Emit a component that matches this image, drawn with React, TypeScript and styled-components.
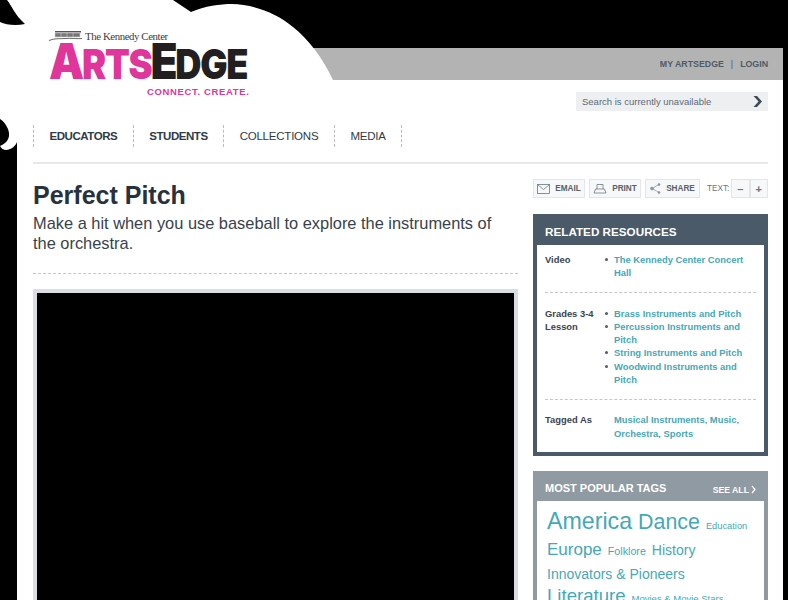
import React from "react";
import styled, { createGlobalStyle } from "styled-components";

const Global = createGlobalStyle`
  html, body { margin: 0; padding: 0; background: #000; }
  body { font-family: "Liberation Sans", Arial, sans-serif; }
  a { text-decoration: none; color: inherit; }
`;

const Viewport = styled.div`
  position: relative;
  width: 788px;
  height: 600px;
  overflow: hidden;
  background: #000;
`;

const Cloud = styled.svg`
  position: absolute;
  left: 0;
  top: 0;
  z-index: 1;
`;

const Logo = styled.div`
  position: absolute;
  left: 49px;
  top: 29px;
  z-index: 2;
  width: 205px;
`;

const Kennedy = styled.div`
  display: flex;
  align-items: center;
  gap: 3px;
  height: 13px;
  font-family: "Liberation Serif", serif;
  font-size: 10.8px;
  letter-spacing: -0.4px;
  color: #3a3a3a;
`;

const Wordmark = styled.div`
  display: flex;
  align-items: baseline;
  height: 37px;
  font-family: "Inter", sans-serif;
  font-weight: 900;
  font-size: 41px;
  line-height: 38px;
  letter-spacing: -1.5px;
  white-space: nowrap;
  transform: scaleX(0.885);
  transform-origin: left center;
`;

const Arts = styled.span`
  color: #e0359b;
`;

const Edge = styled.span`
  color: #231f20;
  margin-left: -1px;
`;

const BigLetter = styled.span`
  font-size: 50px;
  letter-spacing: -2.5px;
`;

const Tagline = styled.div`
  margin: 7px 0 0 98px;
  font-weight: 700;
  font-size: 9.5px;
  line-height: 12px;
  letter-spacing: 0.65px;
  white-space: nowrap;
  color: #e0359b;
`;

const Panel = styled.div`
  margin: 48px 0 0 17px;
  width: 766px;
  height: 552px;
  overflow: hidden;
  background: #fff;
  display: flex;
  flex-direction: column;
`;

const TopBar = styled.div`
  height: 32px;
  flex: none;
  background: #b3b3b3;
  display: flex;
  justify-content: flex-end;
  align-items: center;
  padding: 0 15px 0 0;
  font-size: 8.8px;
  font-weight: 700;
  color: #4d5b68;
  box-sizing: border-box;
`;

const TopSep = styled.span`
  margin: 0 7px;
  font-weight: 400;
`;

const SearchRow = styled.div`
  display: flex;
  justify-content: flex-end;
  padding: 12px 15px 0 0;
`;

const SearchBox = styled.div`
  width: 192px;
  height: 19px;
  box-sizing: border-box;
  background: #edeff1;
  display: flex;
  align-items: center;
  justify-content: space-between;
  padding: 0 4px 0 6px;
  font-size: 9.5px;
  color: #5d6a75;
`;

const Nav = styled.nav`
  display: flex;
  margin: 14px 0 0 16px;
  height: 22px;
  align-items: center;
  border-left: 1px dashed #b9bdc1;
`;

const NavItem = styled.a<{ $bold?: boolean }>`
  display: flex;
  align-items: center;
  height: 22px;
  padding: 0 15.5px;
  border-right: 1px dashed #b9bdc1;
  font-size: 11.5px;
  font-weight: ${(p) => (p.$bold ? 700 : 400)};
  color: #2f3b47;
  letter-spacing: ${(p) => (p.$bold ? "-0.45px" : "-0.22px")};
`;

const Rule = styled.div`
  margin: 15px 15px 0 16px;
  height: 2px;
  background: #e6e8ea;
`;

const Content = styled.div`
  display: grid;
  grid-template-columns: 485px 235px;
  column-gap: 15px;
  margin: 0 0 0 16px;
  flex: 1;
  min-height: 0;
`;

const Left = styled.div`
  display: flex;
  flex-direction: column;
  padding-top: 15px;
`;

const Title = styled.h1`
  margin: 0;
  font-size: 25px;
  line-height: 32px;
  font-weight: 700;
  color: #27323e;
`;

const Sub = styled.p`
  margin: 3px 0 0;
  font-size: 16.4px;
  line-height: 19.5px;
  color: #38424d;
`;

const DottedRule = styled.div`
  margin-top: 20px;
  border-top: 1px dashed #c4c7ca;
`;

const VideoBox = styled.div`
  margin-top: 15px;
  flex: 1;
  background: #000;
  border: 4px solid #dadde1;
  border-bottom: none;
`;

const Right = styled.div`
  display: flex;
  flex-direction: column;
  padding-top: 15px;
`;

const Tools = styled.div`
  display: flex;
  align-items: center;
  height: 19px;
`;

const ToolButton = styled.a<{ $w: number; $gap: number }>`
  flex: none;
  width: ${(p) => p.$w}px;
  height: 19px;
  margin-right: ${(p) => p.$gap}px;
  box-sizing: border-box;
  border: 1px solid #e3e6e8;
  background: #f7f8f9;
  display: flex;
  align-items: center;
  justify-content: center;
  gap: 5px;
  font-size: 8.2px;
  font-weight: 700;
  color: #56626d;
`;

const TextLabel = styled.span`
  flex: none;
  width: 24px;
  margin-left: 3px;
  font-size: 8.2px;
  color: #6a747d;
`;

const SizeButton = styled.a`
  flex: none;
  width: 18.5px;
  height: 19px;
  box-sizing: border-box;
  border: 1px solid #e3e6e8;
  background: #f7f8f9;
  display: flex;
  align-items: center;
  justify-content: center;
  font-size: 11px;
  font-weight: 700;
  color: #6a747d;
`;

const Card = styled.section<{ $color: string; $top: number }>`
  margin-top: ${(p) => p.$top}px;
  background: ${(p) => p.$color};
  padding: 0 4px 4px;
`;

const CardHead = styled.header<{ $h: number }>`
  height: ${(p) => p.$h}px;
  box-sizing: border-box;
  display: flex;
  align-items: center;
  justify-content: space-between;
  padding: 3px 8px 0;
  color: #fff;
  font-weight: 700;
`;

const CardTitle = styled.h2<{ $size: number }>`
  margin: 0;
  font-size: ${(p) => p.$size}px;
  font-weight: 700;
`;

const SeeAll = styled.a`
  display: flex;
  align-items: center;
  gap: 2px;
  font-size: 8.7px;
  margin-top: 4px;
`;

const CardBody = styled.div`
  background: #fff;
`;

const Rows = styled.div`
  padding: 8px 8px 0;
  height: 207px;
  box-sizing: border-box;
`;

const Row = styled.div<{ $sep?: boolean }>`
  display: grid;
  grid-template-columns: 60px 1fr;
  font-size: 9.4px;
  line-height: 13.3px;
  font-weight: 700;
  padding-bottom: 12.5px;
  margin-bottom: 13.5px;
  border-bottom: ${(p) => (p.$sep ? "1px dashed #c4c7ca" : "none")};
`;

const RowLabel = styled.div`
  color: #3a444e;
`;

const LinkList = styled.ul`
  margin: 0;
  padding: 0;
  list-style: none;
`;

const LinkItem = styled.li`
  position: relative;
  padding-left: 9px;
  color: #45a8b8;
  &::before {
    content: "";
    position: absolute;
    left: -0.5px;
    top: 5px;
    width: 3px;
    height: 3px;
    border-radius: 50%;
    background: #4f5b66;
  }
`;

const Tagged = styled.div`
  padding-left: 9px;
  color: #45a8b8;
`;

const Comma = styled.span`
  color: #3a444e;
  font-weight: 400;
`;

const TagCloud = styled.div`
  padding: 9px 10px 0;
  height: 100px;
  box-sizing: border-box;
  color: #45a8b8;
`;

const TagLine = styled.div<{ $h: number }>`
  display: flex;
  align-items: baseline;
  gap: 6px;
  height: ${(p) => p.$h}px;
  white-space: nowrap;
`;

const Tag = styled.a<{ $size: number }>`
  font-size: ${(p) => p.$size}px;
  line-height: 1;
`;

const Chevron = () => (
  <svg width="13" height="13" viewBox="0 0 13 13">
    <path d="M2.5 1 H6 L11 6.5 L6 12 H2.5 L7.5 6.5 Z" fill="#3f4c58" />
  </svg>
);

const MailIcon = () => (
  <svg width="13" height="10" viewBox="0 0 13 10" fill="none" stroke="#6d7882" strokeWidth="0.8">
    <rect x="0.5" y="0.5" width="12" height="9" />
    <path d="M0.5 0.5 L6.5 5.5 L12.5 0.5" />
  </svg>
);

const PrintIcon = () => (
  <svg width="14" height="10" viewBox="0 0 14 10" fill="none" stroke="#6d7882" strokeWidth="0.8">
    <path d="M4 5 V0.5 H10 V5" />
    <path d="M2.5 5 H11.5 L13 9 H1 Z" />
  </svg>
);

const ShareIcon = () => (
  <svg width="11" height="11" viewBox="0 0 11 11" fill="#8a949c" stroke="#8a949c" strokeWidth="0.7">
    <path d="M2 5.5 L9 1.5 M2 5.5 L9 9.5" fill="none" />
    <circle cx="2" cy="5.5" r="1.4" />
    <circle cx="9" cy="1.5" r="1" />
    <circle cx="9" cy="9.5" r="1" />
  </svg>
);

const Building = () => (
  <svg width="33" height="12" viewBox="0 0 33 12">
    <path d="M6 1 H32 V2.5 H6 Z" fill="#555" />
    <path d="M6 3 H31 V7 H6 Z M12 3 V7 M18 3 V7 M24 3 V7" fill="#777" stroke="#ccc" strokeWidth="0.6" />
    <path d="M0 10.5 C6 8 10 9 16 8.5 C22 8 28 9 33 8.5" fill="none" stroke="#444" strokeWidth="0.8" />
  </svg>
);

export default function App() {
  return (
    <Viewport>
      <Global />
      <Cloud width="788" height="170" viewBox="0 0 788 170">
        <path
          d="M0 0 H173 L191 12 C205 6 220 4 232 4 C250 4 276 12 293 27 C308 39 323 58 333 80 H17 V155 H0 Z"
          fill="#fff"
        />
        <path d="M0 0 H7 C12 6 14 14 25 24 C16 26 6 25 0 22 Z" fill="#000" />
        <path
          d="M0 119 C5 122 10 130 9 136 C8 142 4 144 0 146 C2 150 6 151 10 149 C13 148 16 145 17 142 V157 H0 Z"
          fill="#000"
        />
      </Cloud>
      <Logo>
        <Kennedy>
          <Building />
          <span>The Kennedy Center</span>
        </Kennedy>
        <Wordmark>
          <Arts>
            <BigLetter>A</BigLetter>RTS
          </Arts>
          <Edge>
            <BigLetter>E</BigLetter>DGE
          </Edge>
        </Wordmark>
        <Tagline>CONNECT. CREATE.</Tagline>
      </Logo>
      <Panel>
        <TopBar>
          <a>MY ARTSEDGE</a>
          <TopSep>|</TopSep>
          <a>LOGIN</a>
        </TopBar>
        <SearchRow>
          <SearchBox>
            <span>Search is currently unavailable</span>
            <Chevron />
          </SearchBox>
        </SearchRow>
        <Nav>
          <NavItem $bold>EDUCATORS</NavItem>
          <NavItem $bold>STUDENTS</NavItem>
          <NavItem>COLLECTIONS</NavItem>
          <NavItem>MEDIA</NavItem>
        </Nav>
        <Rule />
        <Content>
          <Left>
            <Title>Perfect Pitch</Title>
            <Sub>Make a hit when you use baseball to explore the instruments of the orchestra.</Sub>
            <DottedRule />
            <VideoBox />
          </Left>
          <Right>
            <Tools>
              <ToolButton $w={52} $gap={4}>
                <MailIcon />
                EMAIL
              </ToolButton>
              <ToolButton $w={52} $gap={4}>
                <PrintIcon />
                PRINT
              </ToolButton>
              <ToolButton $w={55} $gap={4}>
                <ShareIcon />
                SHARE
              </ToolButton>
              <TextLabel>TEXT:</TextLabel>
              <SizeButton>–</SizeButton>
              <SizeButton>+</SizeButton>
            </Tools>
            <Card $color="#4a5a69" $top={16}>
              <CardHead $h={31}>
                <CardTitle $size={11.7}>RELATED RESOURCES</CardTitle>
              </CardHead>
              <CardBody>
                <Rows>
                  <Row $sep>
                    <RowLabel>Video</RowLabel>
                    <LinkList>
                      <LinkItem>The Kennedy Center Concert Hall</LinkItem>
                    </LinkList>
                  </Row>
                  <Row $sep>
                    <RowLabel>
                      Grades 3-4
                      <br />
                      Lesson
                    </RowLabel>
                    <LinkList>
                      <LinkItem>Brass Instruments and Pitch</LinkItem>
                      <LinkItem>Percussion Instruments and Pitch</LinkItem>
                      <LinkItem>String Instruments and Pitch</LinkItem>
                      <LinkItem>Woodwind Instruments and Pitch</LinkItem>
                    </LinkList>
                  </Row>
                  <Row>
                    <RowLabel>Tagged As</RowLabel>
                    <Tagged>
                      Musical Instruments<Comma>,</Comma> Music<Comma>,</Comma> Orchestra<Comma>,</Comma> Sports
                    </Tagged>
                  </Row>
                </Rows>
              </CardBody>
            </Card>
            <Card $color="#8f9aa3" $top={15}>
              <CardHead $h={30}>
                <CardTitle $size={11}>MOST POPULAR TAGS</CardTitle>
                <SeeAll>
                  SEE ALL
                  <svg width="5" height="9" viewBox="0 0 5 9" fill="none" stroke="#fff" strokeWidth="1.3">
                    <path d="M1 1 L4 4.5 L1 8" />
                  </svg>
                </SeeAll>
              </CardHead>
              <CardBody>
                <TagCloud>
                  <TagLine $h={31}>
                    <Tag $size={23.2}>America</Tag>
                    <Tag $size={21.4}>Dance</Tag>
                    <Tag $size={9.3}>Education</Tag>
                  </TagLine>
                  <TagLine $h={26}>
                    <Tag $size={17}>Europe</Tag>
                    <Tag $size={10.7}>Folklore</Tag>
                    <Tag $size={14}>History</Tag>
                  </TagLine>
                  <TagLine $h={20}>
                    <Tag $size={14}>Innovators &amp; Pioneers</Tag>
                  </TagLine>
                  <TagLine $h={24}>
                    <Tag $size={18.6}>Literature</Tag>
                    <Tag $size={9.5}>Movies &amp; Movie Stars</Tag>
                  </TagLine>
                </TagCloud>
              </CardBody>
            </Card>
          </Right>
        </Content>
      </Panel>
    </Viewport>
  );
}
